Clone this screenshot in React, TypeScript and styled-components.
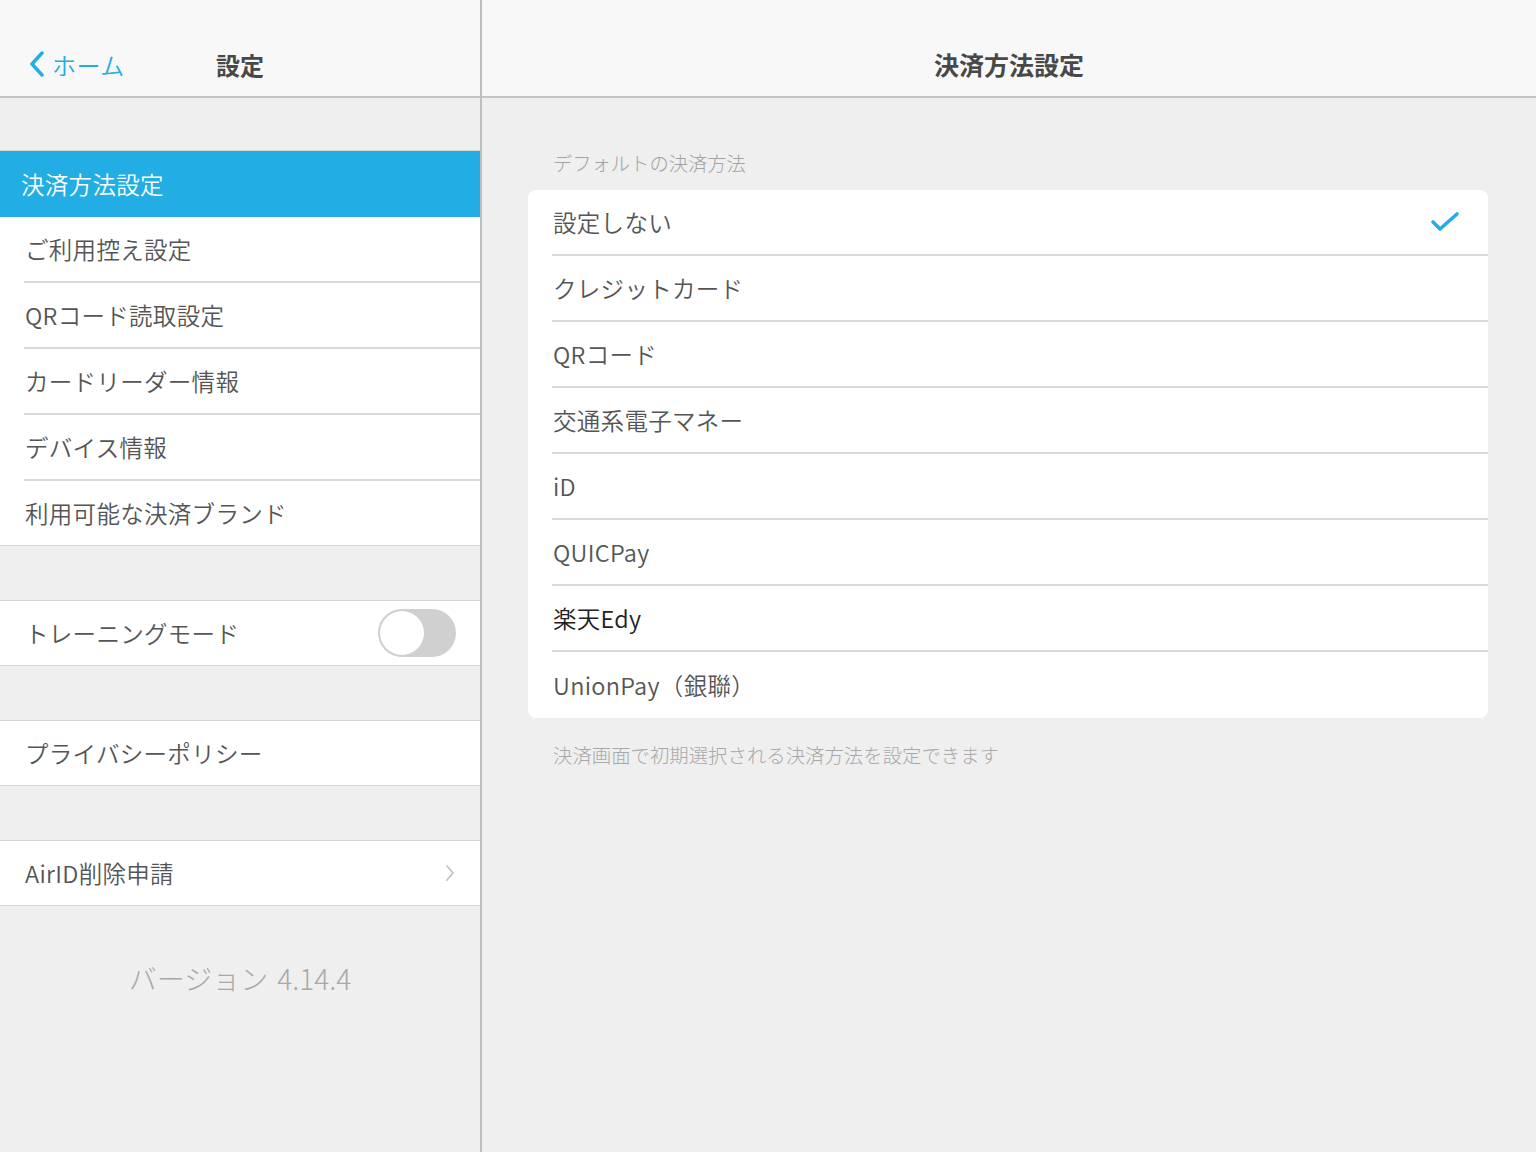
import styled, { createGlobalStyle } from 'styled-components';

const GlobalStyle = createGlobalStyle`
  html, body {
    margin: 0;
    padding: 0;
    background: #efefef;
  }
  body {
    font-family: "Noto Sans CJK JP", "Noto Sans", sans-serif;
  }
`;

const BLUE = '#22aee4';

const menuItems = [
  'ご利用控え設定',
  'QRコード読取設定',
  'カードリーダー情報',
  'デバイス情報',
  '利用可能な決済ブランド',
];

const methods = [
  { label: '設定しない', checked: true },
  { label: 'クレジットカード' },
  { label: 'QRコード' },
  { label: '交通系電子マネー' },
  { label: 'iD' },
  { label: 'QUICPay' },
  { label: '楽天Edy', dark: true },
  { label: 'UnionPay（銀聯）' },
];

const App = () => {
  return (
    <Page>
      <GlobalStyle />
      <Sidebar>
        <Header>
          <BackButton>
            <svg width="18" height="26" viewBox="0 0 18 26">
              <path
                d="M14 2 L4 13 L14 24"
                fill="none"
                stroke={BLUE}
                strokeWidth="3.4"
                strokeLinecap="round"
                strokeLinejoin="round"
              />
            </svg>
            <span>ホーム</span>
          </BackButton>
          <HeaderTitle>設定</HeaderTitle>
        </Header>
        <SideBody>
          <Section>
            <Row $selected>決済方法設定</Row>
            {menuItems.map((item, i) => (
              <Row key={item} $last={i === menuItems.length - 1}>
                {item}
              </Row>
            ))}
          </Section>
          <Section>
            <Row $last>
              トレーニングモード
              <Toggle>
                <Knob />
              </Toggle>
            </Row>
          </Section>
          <Section>
            <Row $last>プライバシーポリシー</Row>
          </Section>
          <Section>
            <Row $last>
              AirID削除申請
              <svg width="12" height="18" viewBox="0 0 12 18">
                <path
                  d="M3 2 L9 9 L3 16"
                  fill="none"
                  stroke="#c2c2c2"
                  strokeWidth="1.8"
                  strokeLinecap="round"
                  strokeLinejoin="round"
                />
              </svg>
            </Row>
          </Section>
          <Version>バージョン 4.14.4</Version>
        </SideBody>
      </Sidebar>
      <Main>
        <Header>
          <MainTitle>決済方法設定</MainTitle>
        </Header>
        <MainBody>
          <GroupLabel>デフォルトの決済方法</GroupLabel>
          <Card>
            {methods.map((m, i) => (
              <MethodRow key={m.label} $last={i === methods.length - 1}>
                <MethodLabel $dark={m.dark}>{m.label}</MethodLabel>
                {m.checked && (
                  <svg width="30" height="22" viewBox="0 0 30 22">
                    <path
                      d="M3 11 L10 18 L27 3"
                      fill="none"
                      stroke={BLUE}
                      strokeWidth="3.6"
                      strokeLinecap="round"
                      strokeLinejoin="round"
                    />
                  </svg>
                )}
              </MethodRow>
            ))}
          </Card>
          <GroupNote>決済画面で初期選択される決済方法を設定できます</GroupNote>
        </MainBody>
      </Main>
    </Page>
  );
};
export default App;

const Page = styled.div`
  display: flex;
  width: 1536px;
  height: 1152px;
  overflow: hidden;
  background: #efefef;
`;

const Sidebar = styled.div`
  width: 480px;
  flex-shrink: 0;
  display: flex;
  flex-direction: column;
  border-right: 2px solid #bebebe;
`;

const Main = styled.div`
  flex: 1;
  display: flex;
  flex-direction: column;
`;

const Header = styled.div`
  height: 98px;
  flex-shrink: 0;
  box-sizing: border-box;
  padding-top: 32px;
  background: #f9f8f9;
  border-bottom: 2px solid #c4c4c4;
  display: flex;
  align-items: center;
  justify-content: center;
  position: relative;
`;

const BackButton = styled.div`
  position: absolute;
  left: 28px;
  top: 32px;
  bottom: 0;
  display: flex;
  align-items: center;
  gap: 6px;
  color: ${BLUE};
  font-size: 24px;
  font-weight: 350;
  letter-spacing: 0.5px;
`;

const HeaderTitle = styled.div`
  font-size: 24px;
  font-weight: 700;
  color: #484848;
`;

const MainTitle = styled(HeaderTitle)`
  font-size: 25px;
`;

const SideBody = styled.div`
  display: flex;
  flex-direction: column;
  padding-top: 52px;
  gap: 54px;
`;

const Section = styled.div`
  display: flex;
  flex-direction: column;
  background: #fff;
  border-top: 1px solid #d6d6d6;
  border-bottom: 1px solid #d6d6d6;
`;

const Row = styled.div<{ $selected?: boolean; $last?: boolean }>`
  height: ${(p) => (p.$last ? '64px' : '66px')};
  box-sizing: border-box;
  margin-left: ${(p) => (p.$selected ? '0' : '24px')};
  padding-left: ${(p) => (p.$selected ? '21px' : '1px')};
  padding-right: 24px;
  display: flex;
  align-items: center;
  justify-content: space-between;
  font-size: 23.5px;
  font-weight: 350;
  letter-spacing: 0.3px;
  color: ${(p) => (p.$selected ? '#fff' : '#555')};
  background: ${(p) => (p.$selected ? BLUE : 'transparent')};
  border-bottom: ${(p) => (p.$last || p.$selected ? 'none' : '2px solid #d9d9d9')};
`;

const Toggle = styled.div`
  width: 78px;
  height: 48px;
  box-sizing: border-box;
  border-radius: 24px;
  background: #d0d0d0;
  padding: 2px;
  display: flex;
  align-items: center;
`;

const Knob = styled.div`
  width: 44px;
  height: 44px;
  border-radius: 50%;
  background: #fff;
  box-shadow: 0 0 0 1px #cfcfcf;
`;

const Version = styled.div`
  margin-top: -2px;
  text-align: center;
  font-size: 28px;
  font-weight: 300;
  color: #a8a8a8;
  line-height: 40px;
  word-spacing: 3px;
`;

const MainBody = styled.div`
  display: flex;
  flex-direction: column;
  padding: 48px 48px 0 46px;
`;

const GroupLabel = styled.div`
  font-size: 19.3px;
  font-weight: 300;
  color: #a3a3a3;
  padding-left: 25px;
  line-height: 34px;
  margin-bottom: 10px;
`;

const Card = styled.div`
  background: #fff;
  border-radius: 8px;
  overflow: hidden;
`;

const MethodRow = styled.div<{ $last?: boolean }>`
  height: 66px;
  box-sizing: border-box;
  margin-left: 24px;
  padding: 0 28px 0 1px;
  display: flex;
  align-items: center;
  justify-content: space-between;
  border-bottom: ${(p) => (p.$last ? 'none' : '2px solid #d9d9d9')};
`;

const MethodLabel = styled.div<{ $dark?: boolean }>`
  font-size: 23.5px;
  font-weight: 350;
  letter-spacing: 0.3px;
  color: ${(p) => (p.$dark ? '#222' : '#555')};
`;

const GroupNote = styled.div`
  font-size: 19.4px;
  font-weight: 300;
  color: #a8a8a8;
  padding-left: 25px;
  margin-top: 22px;
  line-height: 30px;
`;
